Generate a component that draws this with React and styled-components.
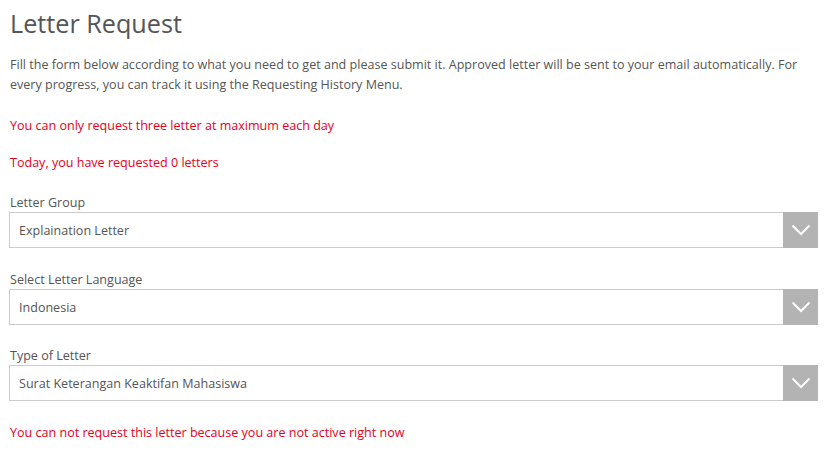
import React from 'react'
import styled, { createGlobalStyle } from 'styled-components'

const GlobalStyle = createGlobalStyle`
  body {
    margin: 0;
    background: #fff;
    font-family: "Open Sans", "Noto Sans", sans-serif;
    color: #555;
  }
`

const Page = styled.div`
  padding: 5px 17px 0 9px;
`

const Title = styled.h1`
  margin: 0 0 13px 1px;
  font-size: 25.2px;
  line-height: 36px;
  font-weight: 400;
  color: #555;
`

const Intro = styled.p`
  margin: 0 0 20px 1px;
  padding-top: 1px;
  font-size: 12.55px;
  line-height: 20px;
`

const Warning = styled.p`
  margin: 0 0 ${({ gap }) => gap}px 1px;
  padding-top: 1px;
  font-size: 12.55px;
  line-height: 19px;
  color: #e4001b;
`

const Field = styled.div`
  margin-bottom: ${({ gap }) => gap}px;
`

const Label = styled.div`
  margin-left: 1px;
  padding-top: 1px;
  font-size: 12.55px;
  line-height: 19px;
  color: #555;
`

const SelectBox = styled.div`
  display: flex;
  height: 36px;
  box-sizing: border-box;
  border: 1px solid #ccc;
  background: #fff;
`

const Value = styled.div`
  flex: 1;
  display: flex;
  align-items: center;
  padding-left: 9px;
  font-size: 12.55px;
  color: #555;
`

const Arrow = styled.div`
  width: 35px;
  margin: -1px -1px -1px 0;
  background: #b3b3b3;
  display: flex;
  align-items: center;
  justify-content: center;
`

function Select({ label, value, gap }) {
  return (
    <Field gap={gap}>
      <Label>{label}</Label>
      <SelectBox>
        <Value>{value}</Value>
        <Arrow>
          <svg width="20" height="12" viewBox="0 0 20 12">
            <path d="M1.5 1.5 L10 10 L18.5 1.5" fill="none" stroke="#fff" strokeWidth="2" />
          </svg>
        </Arrow>
      </SelectBox>
    </Field>
  )
}

export default function App() {
  return (
    <>
      <GlobalStyle />
      <Page>
        <Title>Letter Request</Title>
        <Intro>
          Fill the form below according to what you need to get and please submit it. Approved letter will be sent to your email automatically. For every progress, you can track it using the Requesting History Menu.
        </Intro>
        <Warning gap={17}>You can only request three letter at maximum each day</Warning>
        <Warning gap={20}>Today, you have requested 0 letters</Warning>
        <Select label="Letter Group" value="Explaination Letter" gap={21} />
        <Select label="Select Letter Language" value="Indonesia" gap={20} />
        <Select label="Type of Letter" value="Surat Keterangan Keaktifan Mahasiswa" gap={21} />
        <Warning gap={0}>You can not request this letter because you are not active right now</Warning>
      </Page>
    </>
  )
}
